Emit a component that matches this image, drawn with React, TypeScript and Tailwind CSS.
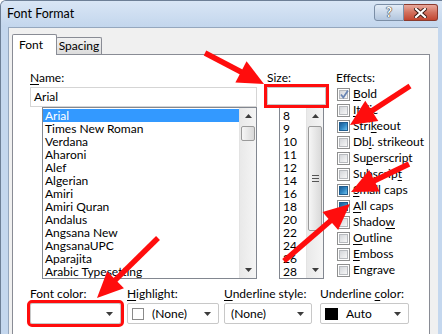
import React from "react";

type CB = "on" | "off" | "mixed";

function Check({ state }: { state: CB }) {
  return (
    <div className="w-[13px] h-[13px] border border-[#8e8f8f] bg-white p-[1px] shrink-0">
      {state === "mixed" ? (
        <div className="w-full h-full border border-[#1f5d8f] bg-gradient-to-br from-[#1d5d94] via-[#2f86c2] to-[#6cc0ec]" />
      ) : (
        <div className="relative w-full h-full border border-[#b7babe] bg-gradient-to-br from-[#d3d6da] to-[#f7f7f7]">
          {state === "on" && (
            <svg className="absolute -left-[1px] -top-[2px]" width="11" height="11" viewBox="0 0 11 11">
              <path d="M2 5.5 L4.3 8.5 L9 1.5" fill="none" stroke="#6a86b4" strokeWidth="1.8" />
            </svg>
          )}
        </div>
      )}
    </div>
  );
}

function Acc({ text, idx }: { text: string; idx: number }) {
  if (idx < 0) return <>{text}</>;
  return (
    <>
      {text.slice(0, idx)}
      <span className="underline underline-offset-[2px]">{text[idx]}</span>
      {text.slice(idx + 1)}
    </>
  );
}

function Tri({ down }: { down?: boolean }) {
  return (
    <svg width="7" height="4" viewBox="0 0 7 4">
      <polygon points={down ? "0,0 7,0 3.5,4" : "0,4 7,4 3.5,0"} fill="#3c3c3c" />
    </svg>
  );
}

function ScrollBar({ thumbH, grip }: { thumbH: number; grip?: boolean }) {
  return (
    <div className="w-[17px] h-full flex flex-col bg-gradient-to-r from-[#e9e9e9] to-[#f5f5f5] border-l border-[#e3e3e3] shrink-0">
      <div className="h-[16px] flex items-center justify-center">
        <Tri />
      </div>
      <div className="flex-1 px-[1px] pt-[2px]">
        <div
          className="w-full rounded-[2px] border border-[#9a9a9a] bg-gradient-to-r from-[#f6f6f6] to-[#d9d9d9] flex flex-col items-center justify-center gap-[2px]"
          style={{ height: thumbH }}
        >
          {grip && (
            <>
              <div className="w-[7px] h-[1px] bg-[#555]" />
              <div className="w-[7px] h-[1px] bg-[#555]" />
              <div className="w-[7px] h-[1px] bg-[#555]" />
            </>
          )}
        </div>
      </div>
      <div className="h-[16px] flex items-center justify-center">
        <Tri down />
      </div>
    </div>
  );
}

function Arrow({ x1, y1, x2, y2 }: { x1: number; y1: number; x2: number; y2: number }) {
  const dx = x2 - x1;
  const dy = y2 - y1;
  const len = Math.hypot(dx, dy);
  const ux = dx / len;
  const uy = dy / len;
  const L = 26;
  const W = 12;
  const bx = x2 - ux * L;
  const by = y2 - uy * L;
  const nx = -uy;
  const ny = ux;
  return (
    <g>
      <line x1={x1} y1={y1} x2={bx + ux * 3} y2={by + uy * 3} stroke="#ff0d0d" strokeWidth={5.5} />
      <polygon
        points={`${x2},${y2} ${bx + nx * W},${by + ny * W} ${bx - nx * W},${by - ny * W}`}
        fill="#ff0d0d"
      />
    </g>
  );
}

const fonts = [
  "Arial",
  "Times New Roman",
  "Verdana",
  "Aharoni",
  "Alef",
  "Algerian",
  "Amiri",
  "Amiri Quran",
  "Andalus",
  "Angsana New",
  "AngsanaUPC",
  "Aparajita",
  "Arabic Typesetting",
];

const sizes = ["8", "9", "10", "11", "12", "14", "16", "18", "20", "22", "24", "26", "28"];

const effects: { t: string; i: number; s: CB }[] = [
  { t: "Bold", i: 0, s: "on" },
  { t: "Italic", i: 0, s: "off" },
  { t: "Strikeout", i: 4, s: "mixed" },
  { t: "Dbl. strikeout", i: 2, s: "off" },
  { t: "Superscript", i: 2, s: "off" },
  { t: "Subscript", i: 8, s: "off" },
  { t: "Small caps", i: 0, s: "mixed" },
  { t: "All caps", i: 0, s: "mixed" },
  { t: "Shadow", i: 5, s: "off" },
  { t: "Outline", i: 0, s: "off" },
  { t: "Emboss", i: 0, s: "off" },
  { t: "Engrave", i: -1, s: "off" },
];

function Dropdown({
  children,
  w,
  ml,
  red,
}: {
  children?: React.ReactNode;
  w: string;
  ml?: string;
  red?: boolean;
}) {
  return (
    <div
      className={`${w} ${ml ?? ""} h-[21px] mt-[1px] bg-white border border-[#c8c8c8] rounded-[2px] flex items-center pr-[7px] ${
        red ? "outline-[3px] outline-solid outline-[#ff0d0d] outline-offset-[0px]" : ""
      }`}
    >
      <div className="flex-1 flex items-center min-w-0">{children}</div>
      <Tri down />
    </div>
  );
}

export default function App() {
  return (
    <div className="relative w-[442px] h-[334px] overflow-hidden bg-[#c4d7ee] border-l border-t border-[#6d7f96] rounded-tl-[6px] flex flex-col font-['Lato','Liberation_Sans',sans-serif] text-[12px] text-black">
      {/* title bar */}
      <div className="h-[26px] shrink-0 flex items-center bg-gradient-to-b from-[#d9e6f5] to-[#c3d6ed] pl-[6px] pr-[4px]">
        <div className="flex-1 text-[12.5px] text-black">Font Format</div>
        <div className="flex items-start self-start mt-[3px]">
          <div className="w-[30px] h-[17px] rounded-l-[3px] border border-[#7b8ea6] bg-gradient-to-b from-[#e3ecf7] via-[#cbd9ea] to-[#b2c6de] flex items-center justify-center">
            <span className="text-white font-bold text-[13px] leading-none [text-shadow:0_0_1px_#333,0_0_1px_#333,0_0_1px_#333]">
              ?
            </span>
          </div>
          <div className="w-[34px] h-[17px] rounded-r-[3px] border border-l-0 border-[#8a3a2e] bg-gradient-to-b from-[#e8a99c] via-[#d2705d] to-[#c2452f] flex items-center justify-center">
            <svg width="13" height="10" viewBox="0 0 13 10">
              <path d="M2 1 L11 9 M11 1 L2 9" stroke="#3b1a14" strokeWidth="4" strokeLinecap="square" />
              <path d="M2 1 L11 9 M11 1 L2 9" stroke="#fff" strokeWidth="2.2" strokeLinecap="square" />
            </svg>
          </div>
        </div>
      </div>

      {/* client area */}
      <div className="flex-1 ml-[7px] w-[430px] bg-[#f0f0f0] border-l border-t border-[#95a7be] pl-[3px] pt-[6px]">
        {/* tabs */}
        <div className="flex items-end h-[20px] relative z-10">
          <div className="w-[45px] h-[21px] mb-[-1px] bg-white border border-b-0 border-[#898c95] rounded-t-[2px] flex items-center pl-[6px]">
            Font
          </div>
          <div className="w-[46px] h-[17px] -ml-[1px] bg-gradient-to-b from-[#f2f2f2] to-[#dcdcdc] border border-b-0 border-[#898c95] rounded-t-[2px] flex items-center justify-center">
            Spacing
          </div>
        </div>
        {/* panel */}
        <div className="w-[418px] h-[300px] bg-white border border-[#898c95] pl-[17px] pt-[14px]">
          <div className="flex">
            {/* name column */}
            <div className="w-[227px] shrink-0">
              <div className="h-[17px] leading-[17px]">
                <Acc text="Name:" idx={0} />
              </div>
              <div className="h-[20px] mt-[1px] border border-[#d5d5d5] bg-white flex items-center pl-[3px]">Arial</div>
              <div className="ml-[12px] w-[215px] h-[172px] border border-[#828790] bg-white flex overflow-hidden">
                <div className="flex-1 pt-[1px] overflow-hidden">
                  {fonts.map((f, i) => (
                    <div
                      key={f}
                      className={`h-[13px] leading-[13px] pl-[2px] whitespace-nowrap ${
                        i === 0 ? "bg-[#3399ff] text-white" : ""
                      }`}
                    >
                      {f}
                    </div>
                  ))}
                </div>
                <ScrollBar thumbH={15} />
              </div>
            </div>
            {/* size column */}
            <div className="w-[60px] ml-[10px] shrink-0">
              <div className="h-[17px] leading-[17px]">Size:</div>
              <div className="w-[59px] h-[18px] mt-[1px] border border-[#c8c8c8] bg-white outline-[3px] outline-solid outline-[#ff0d0d] outline-offset-[0px]" />
              <div className="ml-[12px] mt-[2px] w-[45px] h-[172px] border border-[#828790] bg-white flex overflow-hidden">
                <div className="flex-1 pt-[1px] overflow-hidden">
                  {sizes.map((s) => (
                    <div key={s} className="h-[13px] leading-[13px] pl-[3px]">
                      {s}
                    </div>
                  ))}
                </div>
                <ScrollBar thumbH={105} grip />
              </div>
            </div>
            {/* effects column */}
            <div className="ml-[9px] flex-1">
              <div className="h-[17px] leading-[17px]">Effects:</div>
              {effects.map((e) => (
                <div key={e.t} className="h-[16px] flex items-center pl-[1px]">
                  <Check state={e.s} />
                  <span className="ml-[3px] leading-[16px] whitespace-nowrap">
                    <Acc text={e.t} idx={e.i} />
                  </span>
                </div>
              ))}
            </div>
          </div>

          {/* bottom row */}
          <div className="flex mt-[7px]">
            <div className="w-[91px] shrink-0">
              <div className="h-[16px] leading-[16px]">Font color:</div>
              <Dropdown w="w-[91px]" red />
            </div>
            <div className="w-[92px] ml-[6px] shrink-0">
              <div className="h-[16px] leading-[16px]">
                <Acc text="Highlight:" idx={0} />
              </div>
              <Dropdown w="w-[92px]">
                <div className="w-[12px] h-[12px] ml-[4px] border border-[#8a8a8a] bg-white" />
                <span className="ml-[8px]">(None)</span>
              </Dropdown>
            </div>
            <div className="w-[88px] ml-[5px] shrink-0">
              <div className="h-[16px] leading-[16px]">
                <Acc text="Underline style:" idx={0} />
              </div>
              <Dropdown w="w-[88px]">
                <span className="ml-[6px]">(None)</span>
              </Dropdown>
            </div>
            <div className="w-[89px] ml-[8px] shrink-0">
              <div className="h-[16px] leading-[16px]">
                <Acc text="Underline color:" idx={10} />
              </div>
              <Dropdown w="w-[89px]">
                <div className="w-[13px] h-[12px] ml-[4px] bg-black" />
                <span className="ml-[8px]">Auto</span>
              </Dropdown>
            </div>
          </div>
        </div>
      </div>

      {/* annotation arrows */}
      <svg className="absolute left-0 top-0 pointer-events-none" width="442" height="334" viewBox="0 0 442 334">
        <Arrow x1={204} y1={52} x2={263} y2={83} />
        <Arrow x1={409} y1={85} x2={349} y2={124} />
        <Arrow x1={408} y1={163} x2={350} y2={191} />
        <Arrow x1={283} y1={260} x2={349} y2={203} />
        <Arrow x1={157} y1={237} x2={96} y2={297} />
      </svg>
    </div>
  );
}
